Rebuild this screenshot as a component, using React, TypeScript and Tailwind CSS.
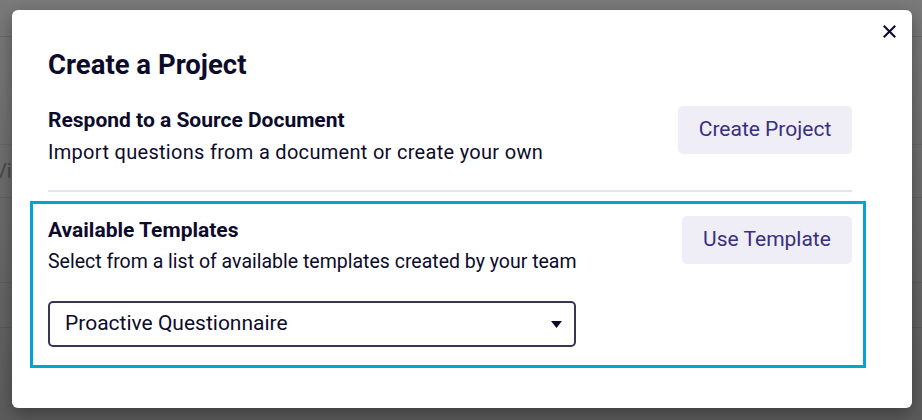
import React from "react";

export default function App() {
  return (
    <div className="relative w-[922px] h-[420px] overflow-hidden bg-gradient-to-b from-[#7a7a7a] to-[#5c5c5c] font-['Roboto',sans-serif]">
      {/* dimmed page behind */}
      <div className="flex flex-col w-full">
        <div className="h-[37px] border-b border-[#6a6a6a]" />
        <div className="h-[108px] border-b border-[#686868]" />
        <div className="h-[53px] border-b border-[#626262] flex items-center">
          <span className="ml-[-6px] text-[20px] text-[#4a4a4a] leading-[24px]">View</span>
        </div>
        <div className="h-[85px] border-b border-[#5e5e5e]" />
        <div className="h-[45px] border-b border-[#5a5a5a]" />
      </div>

      {/* modal */}
      <div className="absolute left-[12px] top-[10px] w-[900px] h-[398px] bg-white rounded-[6px] shadow-[0_6px_18px_rgba(0,0,0,0.35)] pl-[36px] pr-[60px] pt-[39px] text-[#0d0b2b]">
        <button className="absolute right-[16px] top-[15px] w-[13px] h-[13px] flex items-center justify-center text-[#0d0b2b]">
          <svg width="13" height="13" viewBox="0 0 13 13" fill="none" stroke="currentColor" strokeWidth="2.1" strokeLinecap="square">
            <path d="M1.5 1.5L11.5 11.5M11.5 1.5L1.5 11.5" />
          </svg>
        </button>

        <h1 className="text-[27.5px] font-bold leading-[32px]">Create a Project</h1>

        <div className="mt-[25px] flex justify-between items-start">
          <div className="pt-[1px]">
            <div className="text-[21px] font-bold leading-[26px]">Respond to a Source Document</div>
            <div className="text-[20px] leading-[26px] mt-[6px] tracking-[0.3px]">Import questions from a document or create your own</div>
          </div>
          <button className="w-[174px] h-[48px] rounded-[5px] bg-[#efeef6] text-[#3b2f7f] text-[21px]">Create Project</button>
        </div>

        <div className="mt-[25px] h-[2px] bg-[#e3e2ee]" />

        <div className="mt-[9px] -ml-[18px] -mr-[14px] border-[3px] border-[#02a4d5] pl-[15px] pr-[11px] pt-[12px] pb-[18px]">
          <div className="flex justify-between items-start">
            <div className="pt-[1px]">
              <div className="text-[21px] font-bold leading-[26px]">Available Templates</div>
              <div className="text-[19.5px] leading-[26px] mt-[6px]">Select from a list of available templates created by your team</div>
            </div>
            <button className="w-[170px] h-[48px] rounded-[5px] bg-[#efeef6] text-[#3b2f7f] text-[21px]">Use Template</button>
          </div>
          <div className="mt-[26px] w-[528px] h-[46px] border-2 border-[#3a3652] rounded-[5px] flex items-center justify-between pl-[15px] pr-[12px]">
            <span className="text-[21px]">Proactive Questionnaire</span>
            <svg width="11" height="7" viewBox="0 0 11 7"><path d="M0 0H11L5.5 7Z" fill="#0d0b2b" /></svg>
          </div>
        </div>
      </div>
    </div>
  );
}
